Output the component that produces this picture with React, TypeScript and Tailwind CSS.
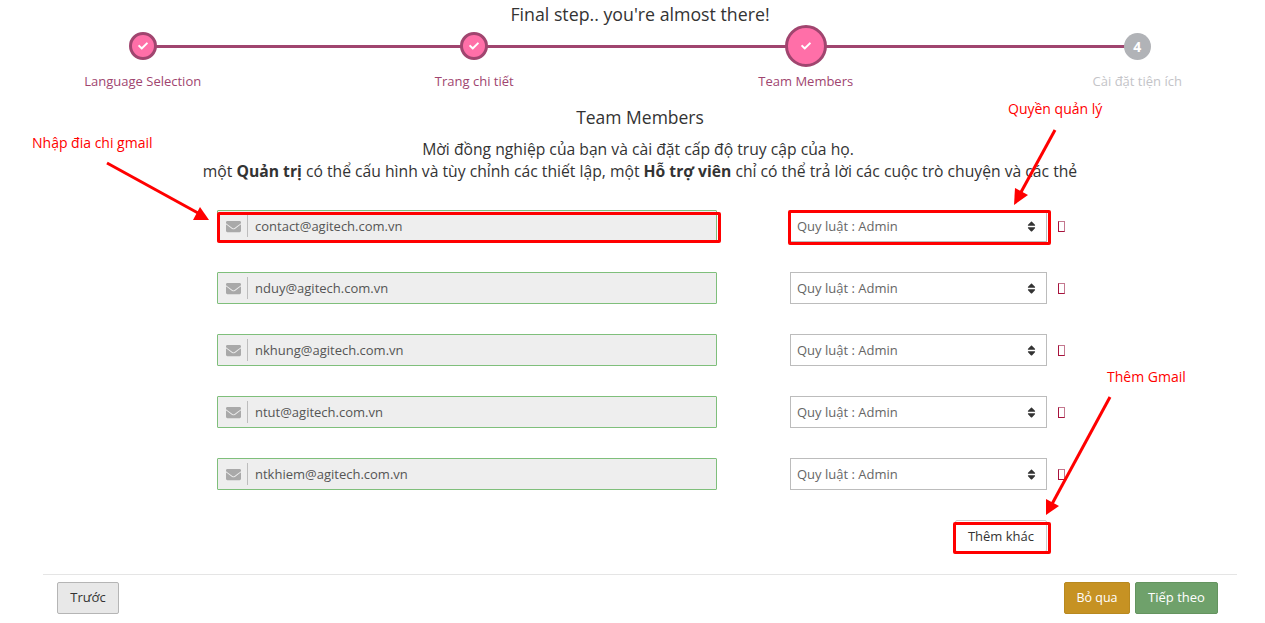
import { FaCheck, FaEnvelope, FaSort } from 'react-icons/fa';

const steps = [
  { label: 'Language Selection', state: 'done' },
  { label: 'Trang chi tiết', state: 'done' },
  { label: 'Team Members', state: 'active' },
  { label: 'Cài đặt tiện ích', state: 'todo' },
];

const members = [
  'contact@agitech.com.vn',
  'nduy@agitech.com.vn',
  'nkhung@agitech.com.vn',
  'ntut@agitech.com.vn',
  'ntkhiem@agitech.com.vn',
];

const Step = ({ label, state, index }: { label: string; state: string; index: number }) => (
  <div className="relative flex flex-col items-center">
    {index < 3 && <div className="absolute left-1/2 top-[20px] h-[3px] w-full bg-[#a0456f]" />}
    <div className="relative flex h-[42px] items-center justify-center">
      {state === 'done' && (
        <div className="flex h-[28px] w-[28px] items-center justify-center rounded-full border-[3px] border-[#a0456f] bg-[#ff6fa8] text-white">
          <FaCheck className="text-[10px]" />
        </div>
      )}
      {state === 'active' && (
        <div className="flex h-[42px] w-[42px] items-center justify-center rounded-full border-[3px] border-[#a0456f] bg-[#ff6fa8] text-white">
          <FaCheck className="text-[10px]" />
        </div>
      )}
      {state === 'todo' && (
        <div className="mt-[1px] flex h-[27px] w-[27px] items-center justify-center rounded-full bg-[#b1b3b7] text-[14px] font-bold text-white">
          4
        </div>
      )}
    </div>
    <div className={`mt-[5px] text-[13px] leading-[18px] ${state === 'todo' ? 'text-[#c4c4c8]' : 'text-[#a0456f]'}`}>
      {label}
    </div>
  </div>
);

const MemberRow = ({ email }: { email: string }) => (
  <div className="flex h-[32px] items-center">
    <div className="ml-[174px] flex h-[32px] w-[500px] items-center rounded-[1px] border border-[#7fbf7b] bg-[#eeeeee]">
      <div className="flex h-[22px] w-[30px] items-center justify-center border-r border-[#bdbdbd]">
        <FaEnvelope className="ml-[1px] text-[15px] text-[#a9a9a9]" />
      </div>
      <div className="mt-[2px] pl-[7px] text-[13px] text-[#555555]">{email}</div>
    </div>
    <div className="ml-[73px] flex h-[32px] w-[257px] items-center justify-between border border-[#bcbcbc] bg-white pl-[6px] pr-[8px] text-[13px] text-[#666666]">
      <span className="mt-[2px]">Quy luật : Admin</span>
      <FaSort className="text-[13px] text-[#333333]" />
    </div>
    <div className="ml-[11px] h-[11px] w-[7px] border border-[#a8123c] border-r-[#c4788f] border-t-[#c4788f]" />
  </div>
);

export default function App() {
  return (
    <div className="relative h-[623px] w-[1265px] overflow-hidden bg-white font-['Open_Sans',sans-serif] text-[#333333]">
      <div className="ml-[43px] w-[1194px]">
        <h1 className="pt-[2px] text-center text-[17.75px] leading-[25px]">Final step.. you're almost there!</h1>
        <div className="-ml-[66px] -mt-[2px] grid w-[1326px] grid-cols-4">
          {steps.map((s, i) => (
            <Step key={s.label} label={s.label} state={s.state} index={i} />
          ))}
        </div>
        <h2 className="mt-[15px] text-center text-[17.5px] leading-[25px]">Team Members</h2>
        <div className="mt-[8px] text-center text-[15.7px] leading-[22px]">
          <p className="pr-[4px]">Mời đồng nghiệp của bạn và cài đặt cấp độ truy cập của họ.</p>
          <p>
            một <b className="font-bold">Quản trị</b> có thể cấu hình và tùy chỉnh các thiết lập, một{' '}
            <b className="font-bold">Hỗ trợ viên</b> chỉ có thể trả lời các cuộc trò chuyện và các thẻ
          </p>
        </div>
        <div className="mt-[28px] flex flex-col gap-[30px]">
          {members.map((m) => (
            <MemberRow key={m} email={m} />
          ))}
        </div>
        <div className="mt-[30px] flex justify-end pr-[190px]">
          <div className="flex h-[32px] w-[92px] items-center justify-center rounded-[2px] border border-[#cccccc] bg-white pt-[1px] text-[13px] text-[#333333]">
            Thêm khác
          </div>
        </div>
        <div className="mt-[22px] flex items-start justify-between border-t border-[#e5e5e5] pl-[14px] pr-[19px] pt-[7px]">
          <button className="h-[32px] w-[62px] rounded-[2px] border border-[#b5b5b5] bg-[#e8e8e8] text-[13px] text-[#333333]">
            Trước
          </button>
          <div className="flex gap-[5px]">
            <button className="h-[32px] w-[66px] rounded-[2px] border border-[#b8891f] bg-[#c69223] text-[12.5px] text-white">
              Bỏ qua
            </button>
            <button className="h-[32px] w-[83px] rounded-[2px] border border-[#64945f] bg-[#6fa16b] text-[13px] font-medium text-white">
              Tiếp theo
            </button>
          </div>
        </div>
      </div>

      {/* red annotations drawn on top of the screenshot */}
      <div className="absolute left-[32px] top-[134px] text-[14px] leading-[18px] text-[#f00]">Nhập đia chi gmail</div>
      <div className="absolute left-[1008px] top-[100px] text-[14px] leading-[18px] text-[#f00]">Quyền quản lý</div>
      <div className="absolute left-[1107px] top-[368px] text-[14px] leading-[18px] text-[#f00]">Thêm Gmail</div>
      <div className="absolute left-[217px] top-[212px] h-[31px] w-[504px] rounded-[2px] border-[3px] border-[#f00]" />
      <div className="absolute left-[788px] top-[210px] h-[35px] w-[263px] rounded-[2px] border-[3px] border-[#f00]" />
      <div className="absolute left-[953px] top-[522px] h-[32px] w-[98px] rounded-[2px] border-[3px] border-[#f00]" />
      <svg className="absolute left-0 top-0" width="1265" height="623" fill="none">
        <line x1="107" y1="163" x2="198" y2="213" stroke="#f00" strokeWidth="3" />
        <polygon points="209,220 193,220 200,207" fill="#f00" />
        <line x1="1055" y1="130" x2="1020" y2="194" stroke="#f00" strokeWidth="3" />
        <polygon points="1014,205 1015,188 1028,195" fill="#f00" />
        <line x1="1110" y1="397" x2="1052" y2="504" stroke="#f00" strokeWidth="3" />
        <polygon points="1046,515 1046,499 1059,506" fill="#f00" />
      </svg>
    </div>
  );
}
